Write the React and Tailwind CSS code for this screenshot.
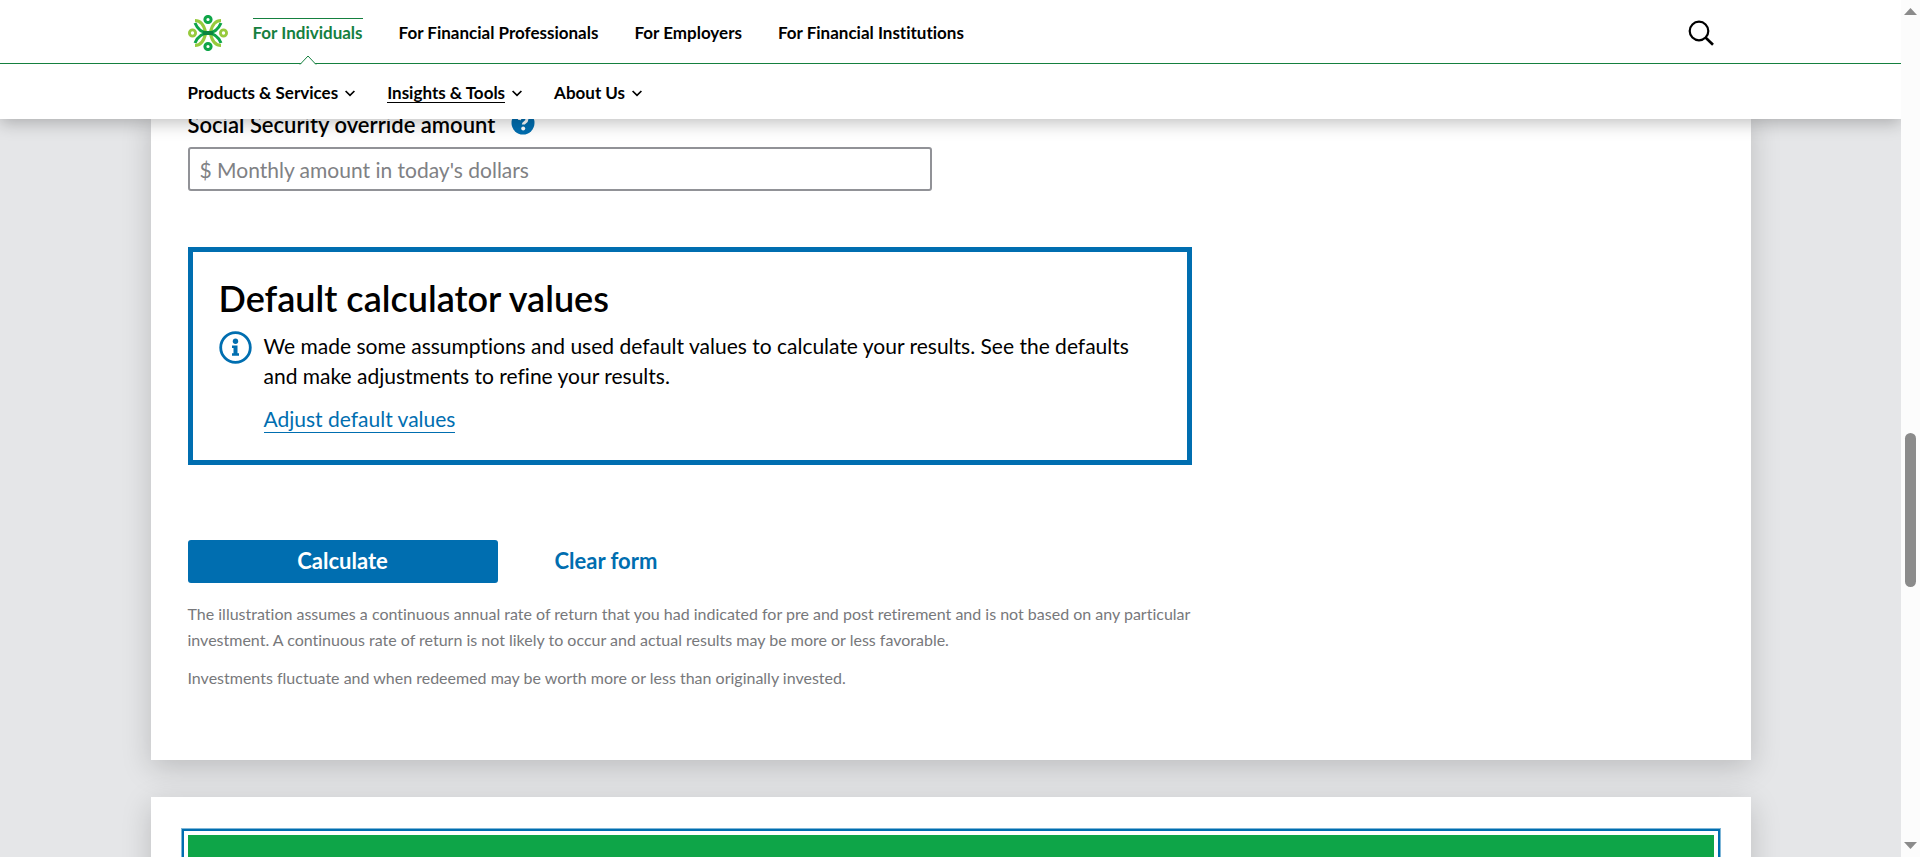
import React from "react";

const audiences = ["For Individuals", "For Financial Professionals", "For Employers", "For Financial Institutions"];
const sections = ["Products & Services", "Insights & Tools", "About Us"];

function Logo() {
  return (
    <svg viewBox="0 0 40 36" className="h-9 w-10" aria-hidden="true" fill="none">
      <g stroke="#97ca3d" strokeWidth="3.2">
        <path d="M7 5.500C12.500 5.500 16 10.500 17.500 17" />
        <path d="M33 5.500C27.500 5.500 24 10.500 22.500 17" />
        <path d="M7 30.500C12.500 30.500 16 25.500 17.500 19" />
        <path d="M33 30.500C27.500 30.500 24 25.500 22.500 19" />
        <circle cx="4.500" cy="18" r="3.100" strokeWidth="2.800" />
        <circle cx="35.500" cy="18" r="3.100" strokeWidth="2.800" />
      </g>
      <g stroke="#0ea548" strokeWidth="3">
        <path d="M7 8C9.500 14 13 17.800 20 17.800S30.500 14 33 8" />
        <path d="M7 28C9.500 22 13 18.200 20 18.200S30.500 22 33 28" />
        <circle cx="20" cy="4.500" r="3.100" />
        <circle cx="20" cy="31.500" r="3.100" />
      </g>
      <path d="M15 16h10v4H15z" fill="#0b8540" />
    </svg>
  );
}

function Chevron() {
  return (
    <svg viewBox="0 0 10 7" className="h-[7px] w-[10px]" fill="none" stroke="#000" strokeWidth="1.700" aria-hidden="true">
      <path d="M.6 1 5 5.400 9.400 1" />
    </svg>
  );
}

function Header() {
  return (
    <header className="relative z-10 shrink-0 bg-white shadow-[0_4px_16px_rgba(0,0,0,0.25)]">
      <div className="border-b border-[#15803f]">
        <div className="mx-auto flex h-[63px] max-w-[1600px] items-center px-[37px] pt-[3px]">
          <a href="#home" aria-label="Home" className="mr-[25px] flex"><Logo /></a>
          <nav aria-label="Audience" className="flex flex-1 items-center gap-9 text-[17px] font-bold leading-5">
            {audiences.map((name, i) => (
              <a key={name} href="#audience" className={i === 0 ? "relative text-[#15803f]" : "relative"}>
                {i === 0 && <span className="absolute inset-x-0 -top-[5px] h-px bg-[#15803f]" />}
                {name}
                {i === 0 && (
                  <svg viewBox="0 0 18 10" className="absolute left-1/2 top-[32px] h-[10px] w-[18px] -translate-x-1/2" aria-hidden="true">
                    <path d="M1 9.500 9 1l8 8.500" fill="#fff" stroke="#15803f" />
                  </svg>
                )}
              </a>
            ))}
          </nav>
          <button type="button" aria-label="Search" className="flex">
            <svg viewBox="0 0 26 26" className="h-[26px] w-[26px]" fill="none" stroke="#000" strokeWidth="2.200" aria-hidden="true">
              <circle cx="11" cy="11" r="9.300" />
              <path d="m17.500 17.500 7.500 7.300" strokeWidth="2.600" />
            </svg>
          </button>
        </div>
      </div>
      <nav aria-label="Sections" className="mx-auto flex h-[55px] max-w-[1600px] items-center gap-8 px-[37px] text-[17px] font-bold leading-[18px]">
        {sections.map((name, i) => (
          <button key={name} type="button" className="flex items-center gap-[7px] pt-1">
            <span className={i === 1 ? "border-b border-black" : "border-b border-transparent"}>{name}</span>
            <Chevron />
          </button>
        ))}
      </nav>
    </header>
  );
}

function CalculatorForm() {
  return (
    <form className="-mt-2 bg-white px-[37px] pb-[69px] shadow-[0_8px_28px_rgba(0,0,0,0.18)]" onSubmit={(e) => e.preventDefault()}>
      <div className="flex h-9 items-start gap-4">
        <label htmlFor="override" className="text-[22px] font-semibold leading-7">Social Security override amount</label>
        <button type="button" aria-label="Help">
          <svg viewBox="0 0 24 24" className="h-6 w-6" aria-hidden="true">
            <circle cx="12" cy="12" r="11.500" fill="#006eb0" />
            <path d="M8.300 9c.3-2.200 1.800-3.300 3.900-3.300 2.200 0 3.700 1.100 3.700 2.900 0 2.700-3.600 2.500-3.600 5" fill="none" stroke="#fff" strokeWidth="3" />
            <circle cx="12.200" cy="17.600" r="2" fill="#fff" />
          </svg>
        </button>
      </div>
      <input
        id="override"
        type="text"
        placeholder="$ Monthly amount in today's dollars"
        className="block h-11 w-full max-w-[744px] rounded-[3px] border-2 border-[#919297] px-[10px] text-[21px] placeholder:text-[#808184]"
      />
      <section className="mt-14 max-w-[1004px] border-[5px] border-[#006eb0] px-[26px] pb-[26px] pt-[26px]">
        <h2 className="text-[36px] font-semibold leading-[40px]">Default calculator values</h2>
        <div className="mt-[13px] flex gap-3">
          <svg viewBox="0 0 33 33" className="h-[33px] w-[33px] shrink-0" aria-hidden="true">
            <circle cx="16.500" cy="16.500" r="14.800" fill="none" stroke="#006eb0" strokeWidth="2.800" />
            <circle cx="16.500" cy="10.300" r="2.700" fill="#006eb0" />
            <path d="M13 14.500h5.500v7.800H20v2.500h-7v-2.500h1.500V17H13z" fill="#006eb0" />
          </svg>
          <div className="text-[21px] leading-[30px]">
            <p>We made some assumptions and used default values to calculate your results. See the defaults and make adjustments to refine your results.</p>
            <a href="#defaults" className="mt-[15px] inline-block border-b border-[#006eb0] leading-[26px] text-[#006eb0]">Adjust default values</a>
          </div>
        </div>
      </section>
      <div className="mt-[75px] flex">
        <button type="submit" className="h-[43px] w-[310px] rounded-[3px] bg-[#006eb0] pb-[3px] text-[22px] font-bold text-white">Calculate</button>
        <button type="reset" className="ml-[57px] pb-[3px] text-[22px] font-bold text-[#006eb0]">Clear form</button>
      </div>
      <div className="mt-[18px] max-w-[1030px] space-y-3 text-base leading-[26px] text-[#77787b]">
        <p>The illustration assumes a continuous annual rate of return that you had indicated for pre and post retirement and is not based on any particular investment. A continuous rate of return is not likely to occur and actual results may be more or less favorable.</p>
        <p>Investments fluctuate and when redeemed may be worth more or less than originally invested.</p>
      </div>
    </form>
  );
}

function ScrollTrack() {
  return (
    <div className="flex w-[19px] shrink-0 flex-col items-center bg-[#fcfcfc] pb-2 pt-2" aria-hidden="true">
      <svg viewBox="0 0 13 7" className="h-[7px] w-[13px]"><path d="M0 7 6.500 0 13 7z" fill="#8b8b8b" /></svg>
      <div className="flex-[418_1_0%]" />
      <div className="w-[11px] flex-[154_1_0%] rounded-full bg-[#8b8b8b]" />
      <div className="flex-[255_1_0%]" />
      <svg viewBox="0 0 13 7" className="h-[7px] w-[13px]"><path d="M0 0h13L6.500 7z" fill="#8b8b8b" /></svg>
    </div>
  );
}

export default function App() {
  return (
    <div className="flex h-screen overflow-hidden bg-[#e5e6e8] font-['Lato',sans-serif] text-black [font-variant-ligatures:none]">
      <div className="flex min-w-0 flex-1 flex-col overflow-hidden">
        <Header />
        <main className="mx-auto w-full max-w-[1600px] flex-1">
          <CalculatorForm />
          <section aria-label="Results" className="mt-[37px] bg-white px-[37px] pb-10 pt-[38px] shadow-[0_8px_28px_rgba(0,0,0,0.18)]">
            <div className="h-[200px] bg-[#0ea548] outline-2 outline-offset-4 outline-[#006eb0] ring-7 ring-[#7fb6d7]">
              <div className="h-full bg-[#0ea548] ring-4 ring-white" />
            </div>
          </section>
        </main>
      </div>
      <ScrollTrack />
    </div>
  );
}
